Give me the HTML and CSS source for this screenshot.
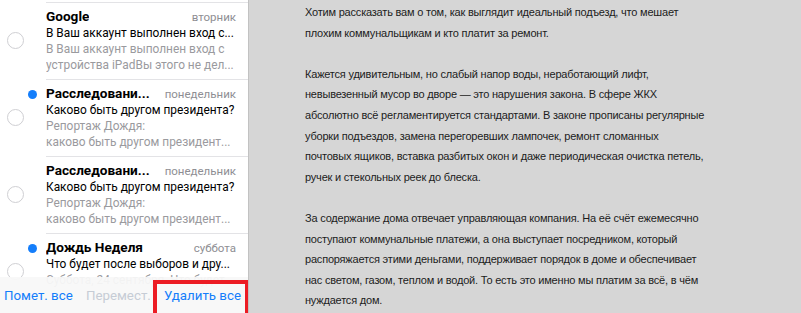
FILE: index.html
```html
<!DOCTYPE html>
<html lang="ru">
<head>
<meta charset="utf-8">
<title>Почта</title>
<link rel="stylesheet" href="styles.css">
</head>
<body>
<div class="app">
  <aside class="sidebar">
    <div class="list">
      <div class="row">
        <div class="gutter"><span class="dot-slot"></span><span class="check"></span></div>
        <div class="content">
          <div class="head"><span class="from">Google</span><span class="date">вторник</span></div>
          <div class="subject">В Ваш аккаунт выполнен вход с...</div>
          <div class="preview">В Ваш аккаунт выполнен вход с</div>
          <div class="preview">устройства iPadВы этого не дел...</div>
        </div>
      </div>
      <div class="row">
        <div class="gutter"><span class="dot-slot"><span class="dot"></span></span><span class="check"></span></div>
        <div class="content">
          <div class="head"><span class="from">Расследовани...</span><span class="date">понедельник</span></div>
          <div class="subject">Каково быть другом президента?</div>
          <div class="preview">Репортаж Дождя:</div>
          <div class="preview">каково быть другом президент...</div>
        </div>
      </div>
      <div class="row">
        <div class="gutter"><span class="dot-slot"></span><span class="check"></span></div>
        <div class="content">
          <div class="head"><span class="from">Расследовани...</span><span class="date">понедельник</span></div>
          <div class="subject">Каково быть другом президента?</div>
          <div class="preview">Репортаж Дождя:</div>
          <div class="preview">каково быть другом президент...</div>
        </div>
      </div>
      <div class="row">
        <div class="gutter"><span class="dot-slot"><span class="dot"></span></span><span class="check"></span></div>
        <div class="content">
          <div class="head"><span class="from">Дождь Неделя</span><span class="date">суббота</span></div>
          <div class="subject">Что будет после выборов и дру...</div>
          <div class="preview">Суббота, 24 сентября. Что будет...</div>
        </div>
      </div>
    </div>
    <div class="toolbar">
      <span class="action">Помет. все</span>
      <span class="action disabled">Перемест.</span>
      <span class="action">Удалить все</span>
    </div>
    <div class="highlight"></div>
  </aside>
  <main class="reader">
    <p>Хотим рассказать вам о том, как выглядит идеальный подъезд, что мешает<br>плохим коммунальщикам и кто платит за ремонт.</p>
    <p>Кажется удивительным, но слабый напор воды, неработающий лифт,<br>невывезенный мусор во дворе — это нарушения закона. В сфере ЖКХ<br>абсолютно всё регламентируется стандартами. В законе прописаны регулярные<br>уборки подъездов, замена перегоревших лампочек, ремонт сломанных<br>почтовых ящиков, вставка разбитых окон и даже периодическая очистка петель,<br>ручек и стекольных реек до блеска.</p>
    <p>За содержание дома отвечает управляющая компания. На её счёт ежемесячно<br>поступают коммунальные платежи, а она выступает посредником, который<br>распоряжается этими деньгами, поддерживает порядок в доме и обеспечивает<br>нас светом, газом, теплом и водой. То есть это именно мы платим за всё, в чём<br>нуждается дом.</p>
  </main>
</div>
</body>
</html>
```
FILE: styles.css
```css
html, body {
  margin: 0;
  padding: 0;
  height: 313px;
  overflow: hidden;
}
.app {
  display: flex;
  height: 313px;
  background: #d6d6d6;
}
.sidebar {
  position: relative;
  width: 248px;
  flex: none;
  background: #ffffff;
  border-right: 1px solid #c2c2c2;
  overflow: hidden;
  font-family: Roboto, "Liberation Sans", sans-serif;
}
.list {
  padding-top: 2px;
}
.row {
  display: flex;
  height: 77px;
}
.gutter {
  width: 46px;
  flex: none;
  display: flex;
  flex-direction: column;
}
.dot-slot {
  display: block;
  height: 30px;
}
.dot {
  display: block;
  width: 9px;
  height: 9px;
  border-radius: 50%;
  background: #147efb;
  margin: 11px 0 0 28px;
}
.check {
  display: block;
  width: 15px;
  height: 15px;
  margin-left: 7px;
  border: 1px solid #cfcfd3;
  border-radius: 50%;
}
.content {
  flex: 1;
  min-width: 0;
  border-top: 1px solid #e3e3e6;
  padding: 5px 12px 0 0;
}
.head {
  display: flex;
  justify-content: space-between;
  align-items: baseline;
  height: 17px;
  line-height: 17px;
}
.from {
  font-size: 13.6px;
  font-weight: 700;
  color: #000;
  white-space: nowrap;
  overflow: hidden;
}
.date {
  font-size: 11.5px;
  color: #8e8e93;
  white-space: nowrap;
}
.subject, .preview {
  font-size: 11.9px;
  line-height: 16px;
  white-space: nowrap;
  overflow: hidden;
}
.subject {
  color: #000;
}
.preview {
  color: #9a9a9e;
}
.toolbar {
  position: absolute;
  left: 0;
  right: 0;
  bottom: 0;
  height: 36px;
  display: flex;
  align-items: center;
  justify-content: space-between;
  padding: 0 7px 0 4px;
  background: rgba(248, 248, 248, 0.94);
  font-size: 13.3px;
}
.action {
  color: #147efb;
  white-space: nowrap;
}
.action.disabled {
  color: #c6ccd5;
}
.highlight {
  position: absolute;
  left: 153px;
  top: 280px;
  width: 88px;
  height: 40px;
  border: 4px solid #ec1c24;
}
.reader {
  flex: 1;
  padding: 2px 0 0 56px;
  font-family: "Liberation Sans", Arial, sans-serif;
  font-size: 11px;
  letter-spacing: -0.2px;
  line-height: 20.6px;
  color: #1c1c1c;
}
.reader p {
  margin: 0 0 20.6px;
  white-space: nowrap;
}
```
